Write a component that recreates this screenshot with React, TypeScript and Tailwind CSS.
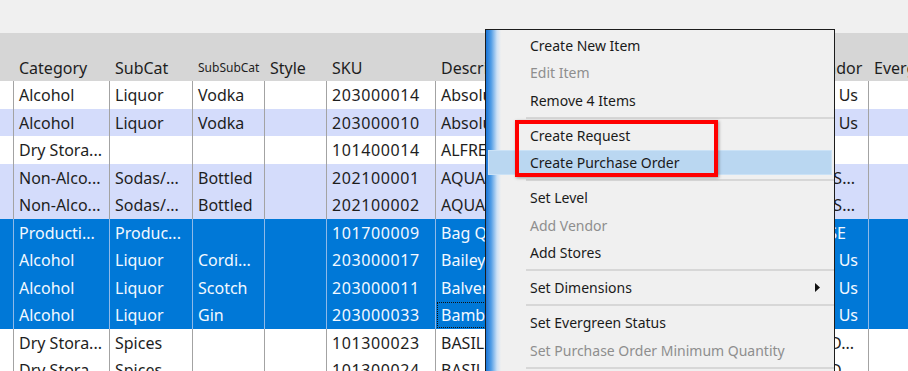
import React from "react";

type RowData = {
  cells: string[];
  kind: "white" | "blue" | "sel";
  vendor: string;
  vpr: string;
  focus?: boolean;
};

const W = [
  "w-[14px]",
  "w-[96px]",
  "w-[83px]",
  "w-[72px]",
  "w-[62px]",
  "w-[109px]",
  "w-[367px]",
  "w-[66px]",
  "w-[120px]",
];

const rows: RowData[] = [
  { cells: ["Alcohol", "Liquor", "Vodka", "", "203000014", "Absolut Vodka 1L"], kind: "white", vendor: "Us", vpr: "pr-[10px]" },
  { cells: ["Alcohol", "Liquor", "Vodka", "", "203000010", "Absolut Citron"], kind: "blue", vendor: "Us", vpr: "pr-[10px]" },
  { cells: ["Dry Stora...", "", "", "", "101400014", "ALFREDO SAUCE"], kind: "white", vendor: "", vpr: "pr-[10px]" },
  { cells: ["Non-Alco...", "Sodas/...", "Bottled", "", "202100001", "AQUAFINA WATER"], kind: "blue", vendor: "S...", vpr: "pr-[13px]" },
  { cells: ["Non-Alco...", "Sodas/...", "Bottled", "", "202100002", "AQUAFINA WATER 1L"], kind: "blue", vendor: "S...", vpr: "pr-[13px]" },
  { cells: ["Producti...", "Produc...", "", "", "101700009", "Bag Quart Ziploc"], kind: "sel", vendor: "SE", vpr: "pr-[22px]" },
  { cells: ["Alcohol", "Liquor", "Cordi...", "", "203000017", "Baileys Irish Cream"], kind: "sel", vendor: "Us", vpr: "pr-[10px]" },
  { cells: ["Alcohol", "Liquor", "Scotch", "", "203000011", "Balvenie 12yr"], kind: "sel", vendor: "Us", vpr: "pr-[10px]" },
  { cells: ["Alcohol", "Liquor", "Gin", "", "203000033", "Bambu Rum"], kind: "sel", vendor: "Us", vpr: "pr-[10px]", focus: true },
  { cells: ["Dry Stora...", "Spices", "", "", "101300023", "BASIL DRIED"], kind: "white", vendor: "D...", vpr: "pr-[14px]" },
  { cells: ["Dry Stora...", "Spices", "", "", "101300024", "BASIL FRESH"], kind: "white", vendor: "D...", vpr: "pr-[14px]" },
];

function Row({ r }: { r: RowData }) {
  const bg =
    r.kind === "sel"
      ? "bg-[#0078d7] text-[#f3f8ff]"
      : r.kind === "blue"
      ? "bg-[#d4dcfb] text-[#1e1e1e]"
      : "bg-white text-[#1e1e1e]";
  const line = r.kind === "sel" ? "border-[#8fb9e8]" : "border-[#a3a3a3]";
  const cells = ["", ...r.cells];
  return (
    <div className={`flex h-[27.5px] shrink-0 ${bg}`}>
      {cells.map((c, i) => (
        <div
          key={i}
          className={`${W[i]} shrink-0 h-full border-r ${line} flex items-center pl-[5px] pt-[1px] overflow-hidden whitespace-nowrap ${
            i === 5 ? "tracking-[0.6px]" : ""
          } ${r.focus && i === 6 ? "outline outline-1 outline-dotted outline-[#111] outline-offset-[-2px]" : ""}`}
        >
          {c}
        </div>
      ))}
      <div className={`${W[7]} shrink-0 h-full border-r ${line} flex items-center justify-end ${r.vpr} pt-[1px] overflow-hidden whitespace-nowrap`}>
        {r.vendor}
      </div>
      <div className={`${W[8]} shrink-0 h-full border-r ${line}`} />
    </div>
  );
}

const headers = ["", "Category", "SubCat", "SubSubCat", "Style", "SKU", "Description", "Vendor", "Evergreen"];

type MenuItem =
  | { type: "item"; label: string; disabled?: boolean; hover?: boolean; sub?: boolean }
  | { type: "sep" };

const menu: MenuItem[] = [
  { type: "item", label: "Create New Item" },
  { type: "item", label: "Edit Item", disabled: true },
  { type: "item", label: "Remove 4 Items" },
  { type: "sep" },
  { type: "item", label: "Create Request" },
  { type: "item", label: "Create Purchase Order", hover: true },
  { type: "sep" },
  { type: "item", label: "Set Level" },
  { type: "item", label: "Add Vendor", disabled: true },
  { type: "item", label: "Add Stores" },
  { type: "sep" },
  { type: "item", label: "Set Dimensions", sub: true },
  { type: "sep" },
  { type: "item", label: "Set Evergreen Status" },
  { type: "item", label: "Set Purchase Order Minimum Quantity", disabled: true },
  { type: "sep" },
];

export default function App() {
  return (
    <div className="relative w-[908px] h-[371px] overflow-hidden bg-[#f0f0f0] font-['Noto_Sans',sans-serif]">
      <div className="h-[33px]" />
      <div className="flex flex-col text-[16px]">
        <div className="flex h-[48px] bg-[#d6d6d6] text-[#1e1e1e]">
          {headers.map((h, i) => (
            <div
              key={i}
              className={`${W[i]} shrink-0 flex items-end pl-[5px] pb-[1px] whitespace-nowrap overflow-hidden ${
                h === "SubSubCat" ? "text-[12px] pb-[4px]" : ""
              }`}
            >
              {h}
            </div>
          ))}
        </div>
        {rows.map((r, i) => (
          <Row key={i} r={r} />
        ))}
      </div>

      <div className="absolute left-[485px] top-[29px] w-[350px] h-[360px] border border-b-0 border-[#1c1c1c] bg-[#f0f0f0] bg-[linear-gradient(to_right,#1a74d6_0px,#4f9ce5_5px,#cde1f5_11px,#f0f0f0_15px)] bg-no-repeat pt-[1.5px] flex flex-col text-[14px]">
        {menu.map((m, i) =>
          m.type === "sep" ? (
            <div key={i} className="h-[7.5px] shrink-0 flex items-center pl-[40px]">
              <div className="h-[2px] w-full bg-[#d7d7d7]" />
            </div>
          ) : m.hover ? (
            <div key={i} className="h-[27.5px] shrink-0 px-[2px] pt-[1px] pb-[1.5px]">
              <div className="h-full bg-[#bad7f1] border border-[#cbe2f6] flex items-center pl-[41px] text-[#1a1a1a] whitespace-nowrap">
                {m.label}
              </div>
            </div>
          ) : (
            <div
              key={i}
              className={`h-[27.5px] shrink-0 flex items-center justify-between pl-[44px] pr-[14px] whitespace-nowrap ${
                m.disabled ? "text-[#8e8e8e]" : "text-[#1a1a1a]"
              }`}
            >
              <span>{m.label}</span>
              {m.sub && (
                <svg width="5" height="9" viewBox="0 0 5 9">
                  <path d="M0 0 L5 4.5 L0 9 Z" fill="#111" />
                </svg>
              )}
            </div>
          )
        )}
      </div>

      <div className="absolute left-[515px] top-[120px] w-[203px] h-[57px] border-[4px] border-[#ff0000] shadow-[1px_1px_3px_rgba(0,0,0,0.35)]" />
    </div>
  );
}
